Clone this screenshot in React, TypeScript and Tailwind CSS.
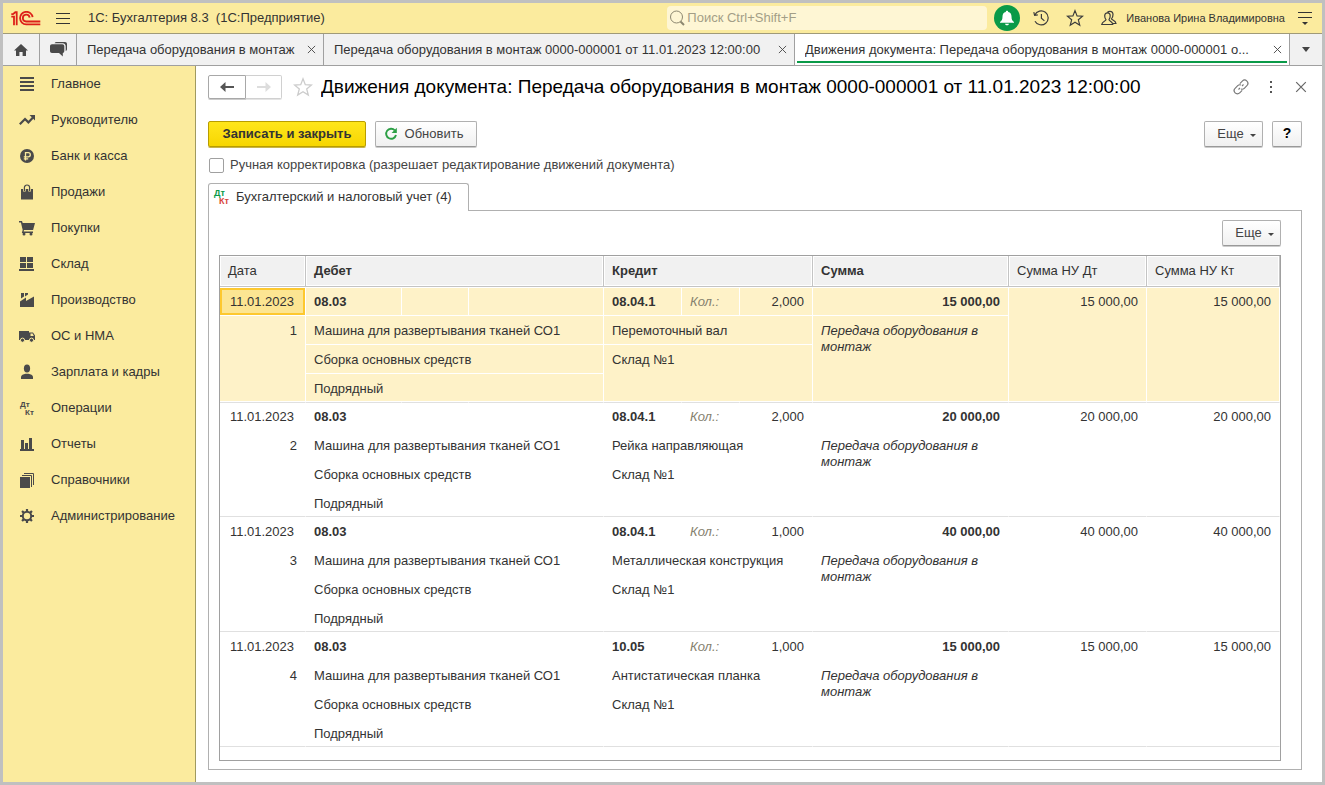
import React from "react";

type IconName =
  | "list" | "trend" | "ruble" | "bag" | "cart" | "stock" | "factory"
  | "truck" | "person" | "dtkt" | "chart" | "books" | "gear";

const menu: { icon: IconName; label: string }[] = [
  { icon: "list", label: "Главное" },
  { icon: "trend", label: "Руководителю" },
  { icon: "ruble", label: "Банк и касса" },
  { icon: "bag", label: "Продажи" },
  { icon: "cart", label: "Покупки" },
  { icon: "stock", label: "Склад" },
  { icon: "factory", label: "Производство" },
  { icon: "truck", label: "ОС и НМА" },
  { icon: "person", label: "Зарплата и кадры" },
  { icon: "dtkt", label: "Операции" },
  { icon: "chart", label: "Отчеты" },
  { icon: "books", label: "Справочники" },
  { icon: "gear", label: "Администрирование" },
];

const iconShapes: Record<IconName, React.ReactNode> = {
  list: <path d="M1 1h14v2H1zM1 5h14v2H1zM1 9h14v2H1zM1 13h14v2H1z" />,
  trend: (
    <>
      <path d="M.8 12.2 6 7l3.400 3.400 4.600-5" fill="none" stroke="currentColor" strokeWidth="2.200" />
      <path d="M10.500 3H16v5.500z" />
    </>
  ),
  ruble: (
    <>
      <circle cx="8" cy="8" r="7" />
      <path d="M6.500 12.500V4.600h2.700a2.100 2.100 0 0 1 0 4.200H4.800M4.800 10.800h4.400" fill="none" stroke="#fbeb9e" strokeWidth="1.300" />
    </>
  ),
  bag: (
    <>
      <path d="M2 5h12v10.500H2z" />
      <path d="M5.400 7.500V3.600a2.600 2.600 0 0 1 5.200 0v3.900" fill="none" stroke="#fbeb9e" strokeWidth="2.600" />
      <path d="M5.400 7V3.600a2.600 2.600 0 0 1 5.200 0V7" fill="none" stroke="currentColor" strokeWidth="1.200" />
    </>
  ),
  cart: (
    <>
      <path d="M0 1h3l.7 2H16l-1.900 7H5l-.4 1.400H14V13H2.800l.9-2.900L1.900 2.400H0z" />
      <circle cx="5" cy="14" r="1.500" />
      <circle cx="12" cy="14" r="1.500" />
    </>
  ),
  stock: <path d="M1 1h6v5H1zM8 1h6v5H8zM1 7h6v5H1zM8 7h6v5H8zM0 13h15v2H0z" />,
  factory: <path d="M2 1h3v3.500L2 6.500zM6 1h3v1.500L6 4.500zM1 9.500l6-4V9l8-4.500V15H1z" />,
  truck: (
    <>
      <path d="M0 3h10v9H0zM10 4.500h4l2 3V12h-6z" />
      <path d="M11.500 5.600h2.100l1.200 2.400h-3.300z" fill="#fbeb9e" />
      <circle cx="3.500" cy="12.200" r="2.100" stroke="#fbeb9e" />
      <circle cx="12.500" cy="12.200" r="2.100" stroke="#fbeb9e" />
    </>
  ),
  person: (
    <>
      <ellipse cx="8" cy="4.500" rx="3.100" ry="3.900" />
      <path d="M2 15v-2.200c0-1.500 2.500-2.600 4.500-3h3c2 .4 4.500 1.500 4.500 3V15z" />
    </>
  ),
  dtkt: (
    <>
      <text x="1" y="7" fontSize="8" fontWeight="bold" fontFamily="Liberation Sans, sans-serif">Дт</text>
      <text x="6" y="15" fontSize="8" fontWeight="bold" fontFamily="Liberation Sans, sans-serif">Кт</text>
    </>
  ),
  chart: <path d="M2 4h3v9H2zM6 7h3v6H6zM10 2h3v11h-3zM1 13h14v2H1z" />,
  books: (
    <>
      <path d="M1 5h10v11H1z" />
      <path d="M3 3.500h9.500V15M5 1.500h9.500V13" fill="none" stroke="currentColor" />
    </>
  ),
  gear: (
    <>
      <circle cx="8" cy="8" r="4.200" fill="none" stroke="currentColor" strokeWidth="2" />
      <path d="M8 1v2.600M8 12.400V15M1 8h2.600M12.400 8H15M3.050 3.050l1.850 1.850M11.100 11.100l1.850 1.850M12.950 3.050 11.100 4.900M4.900 11.100l-1.850 1.850" stroke="currentColor" strokeWidth="2.200" />
    </>
  ),
};

function MenuIcon({ name }: { name: IconName }) {
  return (
    <svg viewBox="0 0 16 16" className="size-4 shrink-0 overflow-visible" fill="currentColor" aria-hidden="true">
      {iconShapes[name]}
    </svg>
  );
}

function Cross({ className }: { className: string }) {
  return (
    <svg viewBox="0 0 10 10" className={className} fill="none" stroke="currentColor" aria-hidden="true">
      <path d="M1 1l8 8M9 1 1 9" />
    </svg>
  );
}

function Star({ className }: { className: string }) {
  return (
    <svg viewBox="0 0 20 20" className={className} fill="none" stroke="currentColor" strokeWidth="1.300" aria-hidden="true">
      <path d="M10 1.800l2.300 5.900 6.200.3-4.800 4 1.600 6.100L10 14.700l-5.300 3.400L6.300 12 1.500 8l6.200-.3z" />
    </svg>
  );
}

function TopBar() {
  return (
    <header className="flex h-[31px] shrink-0 items-center border-b border-[#a09a78] bg-[#fbeb9e]">
      <svg viewBox="0 0 30 15" className="ml-2 h-[15px] w-[30px]" fill="none" stroke="#dd2019" strokeWidth="1.800" role="img" aria-label="1С">
        <path d="M.3 3.200h1.700L4.300 1.200h1.400V14.200" />
        <path d="M.3 5.700h2.700V14.200" />
        <path d="M21.600 6.200A6.300 6.300 0 1 0 15.200 13.400H29.300" />
        <path d="M18.600 6.600A3.400 3.400 0 1 0 15.200 10.500H29.300" />
      </svg>
      <button className="ml-[15px] flex w-[14px] flex-col gap-1" aria-label="Меню">
        <span className="h-px w-full bg-[#333]" />
        <span className="h-px w-full bg-[#333]" />
        <span className="h-px w-full bg-[#333]" />
      </button>
      <h1 className="ml-[18px] whitespace-pre text-[13px]">1С: Бухгалтерия 8.3  (1С:Предприятие)</h1>
      <label className="ml-auto flex h-6 w-80 items-center rounded-sm bg-[#fef6d4] pl-[2px]">
        <svg viewBox="0 0 16 16" className="size-4 shrink-0" fill="none" stroke="#8c8770" aria-hidden="true">
          <circle cx="7.500" cy="7" r="6" />
          <path d="M11.500 11.500l3.500 3.500" strokeWidth="2" />
        </svg>
        <input
          type="text"
          aria-label="Поиск"
          placeholder="Поиск Ctrl+Shift+F"
          className="ml-[2px] w-full bg-transparent text-[13px] outline-none placeholder:text-[#a39e87]"
        />
      </label>
      <button className="ml-[7px] flex size-[26px] items-center justify-center rounded-full bg-[#0a9a48]" aria-label="Уведомления">
        <svg viewBox="0 0 16 16" className="size-4" fill="#fff" aria-hidden="true">
          <path d="M8 .8c.8 0 1.200.5 1.200 1.200C11.500 2.500 12.500 4.300 12.500 6.500c0 3 .8 4.200 2.500 5.500v.8H1V12c1.700-1.300 2.500-2.500 2.500-5.500 0-2.200 1-4 3.300-4.500 0-.7.4-1.200 1.200-1.200zM6 13.800h4c-.3 1-1 1.500-2 1.500s-1.700-.5-2-1.500z" />
        </svg>
      </button>
      <button className="ml-[13px]" aria-label="История">
        <svg viewBox="0 0 16 16" className="size-4" fill="none" stroke="#3c3c3c" strokeWidth="1.200" aria-hidden="true">
          <path d="M1.800 5A7 7 0 1 1 2 11.200M.8 2.200l.8 3.200 3.200-.6M8.400 4v4.300l3 2.600" />
        </svg>
      </button>
      <button className="ml-[17px]" aria-label="Избранное">
        <Star className="size-[18px] text-[#3c3c3c]" />
      </button>
      <button className="ml-4" aria-label="Пользователи">
        <svg viewBox="0 0 18 16" className="h-4 w-[18px]" fill="none" stroke="#3c3c3c" strokeWidth="1.200" aria-hidden="true">
          <path d="M10 1.300c2 0 3 1.300 3 3.300s-1 3.700-1.500 4.200c0 1.300 4.200 1.500 4.500 4.700h-3" />
          <path d="M7.500 2.200c.6-.6 1.500-.9 2.500-.9M7.500 2.800c1.800 0 2.700 1.200 2.700 3S9.400 9.200 9 9.700c0 1.200 3.500 1.500 3.800 4.800H1.700C2 11.200 6 10.900 6 9.700c-.5-.5-1.300-2.100-1.300-3.900s1-3 2.800-3z" />
        </svg>
      </button>
      <span className="ml-2 text-[11px]">Иванова Ирина Владимировна</span>
      <button className="mr-[10px] ml-[13px] flex w-[14px] flex-col items-center gap-1" aria-label="Настройки">
        <span className="h-px w-full bg-[#333]" />
        <span className="h-px w-full bg-[#333]" />
        <span className="border-x-[3px] border-t-[3px] border-x-transparent border-t-[#333]" />
      </button>
    </header>
  );
}

function WindowTab({ label, title, active = false, className }: { label: string; title?: string; active?: boolean; className: string }) {
  return (
    <div className={`flex min-w-0 border-r border-[#a0a0a0] px-[2px] ${active ? "bg-white" : ""} ${className}`}>
      <div className={`flex min-w-0 flex-1 items-center gap-2 border-b-2 pr-[5px] pl-2 ${active ? "mb-[2px] border-[#0a9a48] pt-1" : "border-transparent pt-[2px]"}`}>
        <button className="min-w-0 flex-1 truncate text-left" title={title}>{label}</button>
        <button className="text-[#444]" aria-label="Закрыть вкладку">
          <Cross className="size-[9px]" />
        </button>
      </div>
    </div>
  );
}

function TabBar() {
  return (
    <nav className="flex h-8 shrink-0 border-b border-[#a0a0a0] bg-[#f1f1f1] text-[13px]">
      <button className="flex w-[37px] shrink-0 items-center justify-center border-r border-[#a0a0a0]" aria-label="Начальная страница">
        <svg viewBox="0 0 14 12" className="h-3 w-[14px]" fill="#4a4a4a" aria-hidden="true">
          <path d="M7 0l7 6.500h-2V12H8.600V8H5.400v4H2V6.500H0z" />
        </svg>
      </button>
      <button className="flex w-[37px] shrink-0 items-center justify-center border-r border-[#a0a0a0]" aria-label="Обсуждения">
        <svg viewBox="0 0 17 15" className="h-[15px] w-[17px]" fill="#4a4a4a" aria-hidden="true">
          <path d="M4.500 1.200C5 .4 5.600 0 6.500 0H15c1.200 0 2 .8 2 2v5c0 1-.5 1.700-1.300 2V4.500c0-2-1-3.300-3-3.300z" />
          <path d="M2 2.300h10.300c1.200 0 2 .8 2 2V9c0 1.200-.8 2-1.500 2v3.500L9 11H2c-1.200 0-2-.8-2-2V4.300c0-1.200.8-2 2-2z" />
        </svg>
      </button>
      <WindowTab label="Передача оборудования в монтаж" className="flex-[242_1_0px]" />
      <WindowTab label="Передача оборудования в монтаж 0000-000001 от 11.01.2023 12:00:00" className="flex-[466_1_0px]" />
      <WindowTab
        active
        label="Движения документа: Передача оборудования в монтаж 0000-000001 о..."
        title="Движения документа: Передача оборудования в монтаж 0000-000001 от 11.01.2023 12:00:00"
        className="flex-[490_1_0px]"
      />
      <button className="flex w-8 shrink-0 items-center justify-center" aria-label="Список окон">
        <span className="border-x-4 border-t-[5px] border-x-transparent border-t-[#444]" />
      </button>
    </nav>
  );
}

const buttonFace = "flex h-[26px] items-center justify-center rounded-[2px] border border-[#b0b0b0] border-b-[#999] bg-linear-to-b from-white to-[#f0f0f0] pb-px shadow-[0_1px_0_#ccc]";

function MoreButton() {
  return (
    <button className={`${buttonFace} w-[59px] gap-[6px] pl-[6px] text-[#444]`}>
      Еще
      <span className="mt-1 border-x-[3px] border-t-[3px] border-x-transparent border-t-[#444]" />
    </button>
  );
}

type Entry = {
  no: number;
  creditAccount: string;
  qty: string;
  item: string;
  amount: string;
};

const entries: Entry[] = [
  { no: 1, creditAccount: "08.04.1", qty: "2,000", item: "Перемоточный вал", amount: "15 000,00" },
  { no: 2, creditAccount: "08.04.1", qty: "2,000", item: "Рейка направляющая", amount: "20 000,00" },
  { no: 3, creditAccount: "08.04.1", qty: "1,000", item: "Металлическая конструкция", amount: "40 000,00" },
  { no: 4, creditAccount: "10.05", qty: "1,000", item: "Антистатическая планка", amount: "15 000,00" },
];

function EntryRows({ entry, selected, afterSelected }: { entry: Entry; selected: boolean; afterSelected: boolean }) {
  const top = afterSelected ? "border-t border-t-[#e0e0e0]" : "border-t border-t-transparent";
  const inner = selected ? "border-r border-b border-r-white border-b-white" : "border-r border-b border-transparent";
  const last = selected ? "border-r border-b border-r-white border-b-white" : "border-r border-b border-r-transparent border-b-[#e0e0e0]";
  const cellTop = selected ? "border-t border-t-white" : top;
  return (
    <tbody className={selected ? "bg-[#fef2c8]" : ""}>
      <tr className="h-[29px]">
        <td className={`${inner} ${cellTop} p-0`}>
          <div className={`flex h-[27px] items-center justify-end pr-[9px] ${selected ? "border-2 border-[#fdc82f] bg-[#fce592]" : "border-2 border-transparent"}`}>
            11.01.2023
          </div>
        </td>
        <td className={`${inner} ${cellTop} px-2 font-bold`}>08.03</td>
        <td className={`${inner} ${cellTop}`} />
        <td className={`${inner} ${cellTop}`} />
        <td className={`${inner} ${cellTop} px-2 font-bold`}>{entry.creditAccount}</td>
        <td className={`${inner} ${cellTop} px-2 text-[#85816e] italic`}>Кол.:</td>
        <td className={`${inner} ${cellTop} px-2 text-right`}>{entry.qty}</td>
        <td className={`${inner} ${cellTop} px-2 text-right font-bold`}>{entry.amount}</td>
        <td rowSpan={4} className={`${last} ${cellTop} px-2 pt-[6px] text-right align-top`}>{entry.amount}</td>
        <td rowSpan={4} className={`${last} ${cellTop} px-2 pt-[6px] text-right align-top`}>{entry.amount}</td>
      </tr>
      <tr className="h-[29px]">
        <td rowSpan={3} className={`${last} px-2 pt-[7px] text-right align-top`}>{entry.no}</td>
        <td colSpan={3} className={`${inner} px-2 pt-[7px] align-top`}>Машина для развертывания тканей СО1</td>
        <td colSpan={3} className={`${inner} px-2 pt-[7px] align-top`}>{entry.item}</td>
        <td rowSpan={3} className={`${last} px-2 pt-[7px] align-top italic`}>Передача оборудования в монтаж</td>
      </tr>
      <tr className="h-[29px]">
        <td colSpan={3} className={`${inner} px-2 pt-[7px] align-top`}>Сборка основных средств</td>
        <td colSpan={3} rowSpan={2} className={`${last} px-2 pt-[7px] align-top`}>Склад №1</td>
      </tr>
      <tr className="h-7">
        <td colSpan={3} className={`${last} px-2 pt-[7px] align-top`}>Подрядный</td>
      </tr>
    </tbody>
  );
}

function EntriesTable() {
  const head = "border-r border-b border-[#c4c4c4] bg-[#f1f1f1] px-2 text-left font-normal shadow-[inset_1px_1px_0_#fff,inset_-1px_-1px_0_#fff]";
  return (
    <table className="w-full table-fixed border-separate border-spacing-0 leading-4">
      <colgroup>
        <col className="w-[86px]" />
        <col className="w-[96px]" />
        <col className="w-[67px]" />
        <col className="w-[135px]" />
        <col className="w-[78px]" />
        <col className="w-[58px]" />
        <col className="w-[73px]" />
        <col className="w-[196px]" />
        <col className="w-[138px]" />
        <col className="w-[133px]" />
      </colgroup>
      <thead>
        <tr className="h-[31px]">
          <th className={head}>Дата</th>
          <th colSpan={3} className={head}><b>Дебет</b></th>
          <th colSpan={3} className={head}><b>Кредит</b></th>
          <th className={head}><b>Сумма</b></th>
          <th className={head}>Сумма НУ Дт</th>
          <th className={head}>Сумма НУ Кт</th>
        </tr>
      </thead>
      {entries.map((entry, i) => (
        <EntryRows key={entry.no} entry={entry} selected={i === 0} afterSelected={i === 1} />
      ))}
    </table>
  );
}

export default function App() {
  return (
    <div className="flex min-h-screen flex-col border-[3px] border-[#c0c0c0] bg-white font-['Liberation_Sans',Arial,sans-serif] text-[13px] text-[#333]">
      <TopBar />
      <TabBar />
      <div className="flex flex-1">
        <aside className="w-[193px] shrink-0 border-r border-[#a09a60] bg-[#fbeb9e]">
          <ul>
            {menu.map((m) => (
              <li key={m.label}>
                <a href="#" className="flex h-9 items-center gap-4 pl-4 text-[#333]">
                  <span className="text-[#4a4a4a]"><MenuIcon name={m.icon} /></span>
                  {m.label}
                </a>
              </li>
            ))}
          </ul>
        </aside>
        <main className="flex min-w-0 flex-1 flex-col pt-[9px] pr-5 pb-3 pl-3">
          <div className="flex h-6 items-center">
            <div className="flex">
              <button className="flex h-6 w-[38px] items-center justify-center rounded-l-[2px] border border-[#a8a8a8] shadow-[0_1px_0_#ccc]" aria-label="Назад">
                <svg viewBox="0 0 14 10" className="h-[10px] w-[14px]" fill="#555" aria-hidden="true">
                  <path d="M5.500 0v3.900H14v2.200H5.500V10L0 5z" />
                </svg>
              </button>
              <button className="flex h-6 w-9 items-center justify-center rounded-r-[2px] border border-l-0 border-[#d0d0d0] shadow-[0_1px_0_#e4e4e4]" aria-label="Вперед">
                <svg viewBox="0 0 14 10" className="h-[10px] w-[14px]" fill="#ddd" aria-hidden="true">
                  <path d="M8.500 0v4.100H0v1.800h8.500V10L14 5z" />
                </svg>
              </button>
            </div>
            <button className="ml-[11px]" aria-label="В избранное">
              <Star className="size-5 text-[#ccc]" />
            </button>
            <h2 className="ml-2 min-w-0 flex-1 truncate text-[19px] text-black">
              Движения документа: Передача оборудования в монтаж 0000-000001 от 11.01.2023 12:00:00
            </h2>
            <button aria-label="Ссылка">
              <svg viewBox="0 0 16 16" className="size-4" fill="none" stroke="#777" strokeWidth="1.100" aria-hidden="true">
                <path d="M6.800 4.600 9.300 2.100a3.200 3.200 0 0 1 4.600 4.600L11.300 9.300a3.200 3.200 0 0 1-3.300.8" />
                <path d="M9.200 11.400 6.700 13.900A3.200 3.200 0 0 1 2.100 9.300L4.700 6.700A3.200 3.200 0 0 1 8 5.900" />
                <path d="M5.500 10.500l1.500-1.500M9 7l1.500-1.500" />
              </svg>
            </button>
            <button className="ml-[21px] flex w-[3px] flex-col gap-[3px]" aria-label="Дополнительно">
              <span className="size-[2px] bg-[#555]" />
              <span className="size-[2px] bg-[#555]" />
              <span className="size-[2px] bg-[#555]" />
            </button>
            <button className="-mr-[5px] ml-[22px] text-[#666]" aria-label="Закрыть">
              <Cross className="size-3" />
            </button>
          </div>

          <div className="mt-[22px] flex">
            <button className="h-[26px] w-[158px] rounded-[2px] border border-[#b89d00] bg-linear-to-b from-[#ffe61a] to-[#f7d600] font-bold whitespace-nowrap shadow-[0_1px_0_#c8b44a]">
              Записать и закрыть
            </button>
            <button className={`${buttonFace} ml-[9px] w-[102px] gap-[7px] pr-[5px] text-[#444]`}>
              <svg viewBox="0 0 14 14" className="size-[14px]" aria-hidden="true">
                <path d="M10.800 3.300A5 5 0 1 0 12 8" fill="none" stroke="#2c9f45" strokeWidth="1.900" />
                <path d="M12.800.8v5.200H7.600z" fill="#2c9f45" />
              </svg>
              Обновить
            </button>
            <div className="ml-auto flex gap-[9px]">
              <MoreButton />
              <button className={`${buttonFace} w-[30px] text-[14px] font-bold text-black`} aria-label="Справка">?</button>
            </div>
          </div>

          <label className="mt-[9px] flex h-[18px] items-center gap-[6px] self-start pl-px text-[#444]">
            <input type="checkbox" className="size-[15px] appearance-none rounded-[2px] border border-[#a0a0a0] bg-white" />
            Ручная корректировка (разрешает редактирование движений документа)
          </label>

          <button className="relative z-10 mt-[9px] -mb-px flex h-7 w-[261px] items-center gap-[6px] self-start rounded-t-[3px] border border-b-0 border-[#b0b0b0] bg-white pb-[2px] pl-[5px]">
            <svg viewBox="0 0 16 16" className="size-4 shrink-0 overflow-visible" aria-hidden="true">
              <text x="0" y="7" fontSize="9" fontWeight="bold" fill="#0a9a48" fontFamily="Liberation Sans, sans-serif">Дт</text>
              <text x="5" y="15" fontSize="9" fontWeight="bold" fill="#d9453b" fontFamily="Liberation Sans, sans-serif">Кт</text>
            </svg>
            Бухгалтерский и налоговый учет (4)
          </button>
          <section className="flex flex-1 flex-col border border-[#b0b0b0] pt-[9px] pr-5 pb-2 pl-[10px]">
            <div className="flex justify-end">
              <MoreButton />
            </div>
            <div className="mt-[9px] flex-1 border border-[#a0a0a0]">
              <EntriesTable />
            </div>
          </section>
        </main>
      </div>
    </div>
  );
}
